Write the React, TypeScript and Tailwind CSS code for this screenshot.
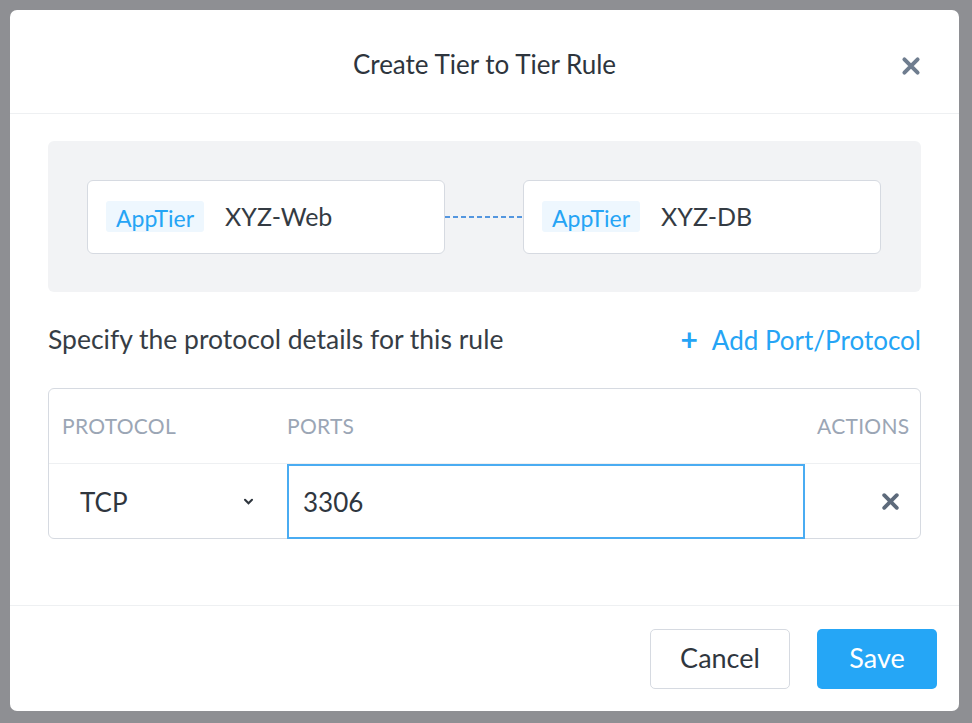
import React from "react";

const font = { fontFamily: "Lato, 'Open Sans', sans-serif" };

function XIcon({ className, w = 3.6 }: { className?: string; w?: number }) {
  return (
    <svg viewBox="0 0 20 20" className={className} fill="none">
      <path d="M4 4 L16 16 M16 4 L4 16" stroke="currentColor" strokeWidth={w} strokeLinecap="round" />
    </svg>
  );
}

function TierCard({ name }: { name: string }) {
  return (
    <div className="w-[358px] h-[74px] bg-white border border-[#d6dae1] rounded-[6px] flex items-center pl-[18px]">
      <span className="h-[31px] px-[10px] flex items-center bg-[#eef7fe] rounded-[3px] text-[#25a4f5] text-[23px] pt-[4px]">AppTier</span>
      <span className="ml-[21px] text-[25px] text-[#343b43]">{name}</span>
    </div>
  );
}

export default function App() {
  return (
    <div className="w-[972px] h-[723px] bg-[#8e8f93] pt-[10px] pl-[10px] overflow-hidden" style={font}>
      <div className="w-[949px] h-[701px] bg-white rounded-[7px] flex flex-col">
        <div className="relative h-[104px] flex items-center justify-center border-b border-[#eef0f2] shrink-0 pt-[5px]">
          <span className="text-[26px] text-[#2e353d]">Create Tier to Tier Rule</span>
          <XIcon className="absolute right-[37px] top-[45px] w-[22px] h-[22px] text-[#6f7d8f]" />
        </div>
        <div className="px-[38px] pt-[27px] flex-1">
          <div className="h-[151px] bg-[#f2f3f5] rounded-[6px] flex items-center pl-[39px]">
            <TierCard name="XYZ-Web" />
            <svg width="78" height="4" className="shrink-0">
              <line x1="0" y1="2" x2="78" y2="2" stroke="#2178d8" strokeWidth="1.5" strokeDasharray="5 3" />
            </svg>
            <TierCard name="XYZ-DB" />
          </div>
          <div className="h-[96px] flex items-center justify-between">
            <span className="text-[26.5px] text-[#363d45]">Specify the protocol details for this rule</span>
            <span className="flex items-center text-[#25a4f5] text-[26px]">
              <span className="text-[30px] font-bold mr-[14px] leading-none pb-[3px]">+</span>
              Add Port/Protocol
            </span>
          </div>
          <div className="h-[151px] border border-[#d6dae1] rounded-[6px] flex flex-col">
            <div className="h-[75px] flex items-center border-b border-[#eef0f2] text-[#9ba6b5] text-[21px] tracking-[0.3px]">
              <span className="w-[238px] pl-[13px]">PROTOCOL</span>
              <span className="w-[518px]">PORTS</span>
              <span className="pl-[12px]">ACTIONS</span>
            </div>
            <div className="flex-1 flex items-stretch">
              <div className="w-[238px] flex items-center justify-between pl-[31px] pr-[33px]">
                <span className="text-[26px] text-[#2f363e] pt-[2px]">TCP</span>
                <svg viewBox="0 0 12 8" className="w-[11px] h-[7px]">
                  <path d="M2 2 L6 6 L10 2" stroke="#2f363e" strokeWidth="2.4" fill="none" strokeLinecap="round" />
                </svg>
              </div>
              <div className="w-[518px] border-2 border-[#4aacf2] flex items-center pl-[14px] -mb-px">
                <span className="text-[26px] text-[#2f363e] pt-[2px]">3306</span>
              </div>
              <div className="flex-1 flex items-center justify-end pr-[19px]">
                <XIcon className="w-[21px] h-[21px] text-[#5d6a7b]" />
              </div>
            </div>
          </div>
        </div>
        <div className="h-[106px] border-t border-[#eef0f2] flex items-center justify-end pr-[22px] gap-[27px] shrink-0">
          <button className="w-[140px] h-[60px] border border-[#d6dae1] rounded-[5px] text-[27px] text-[#2f363e]">Cancel</button>
          <button className="w-[120px] h-[60px] bg-[#25a6f6] rounded-[5px] text-[27px] text-white">Save</button>
        </div>
      </div>
    </div>
  );
}
